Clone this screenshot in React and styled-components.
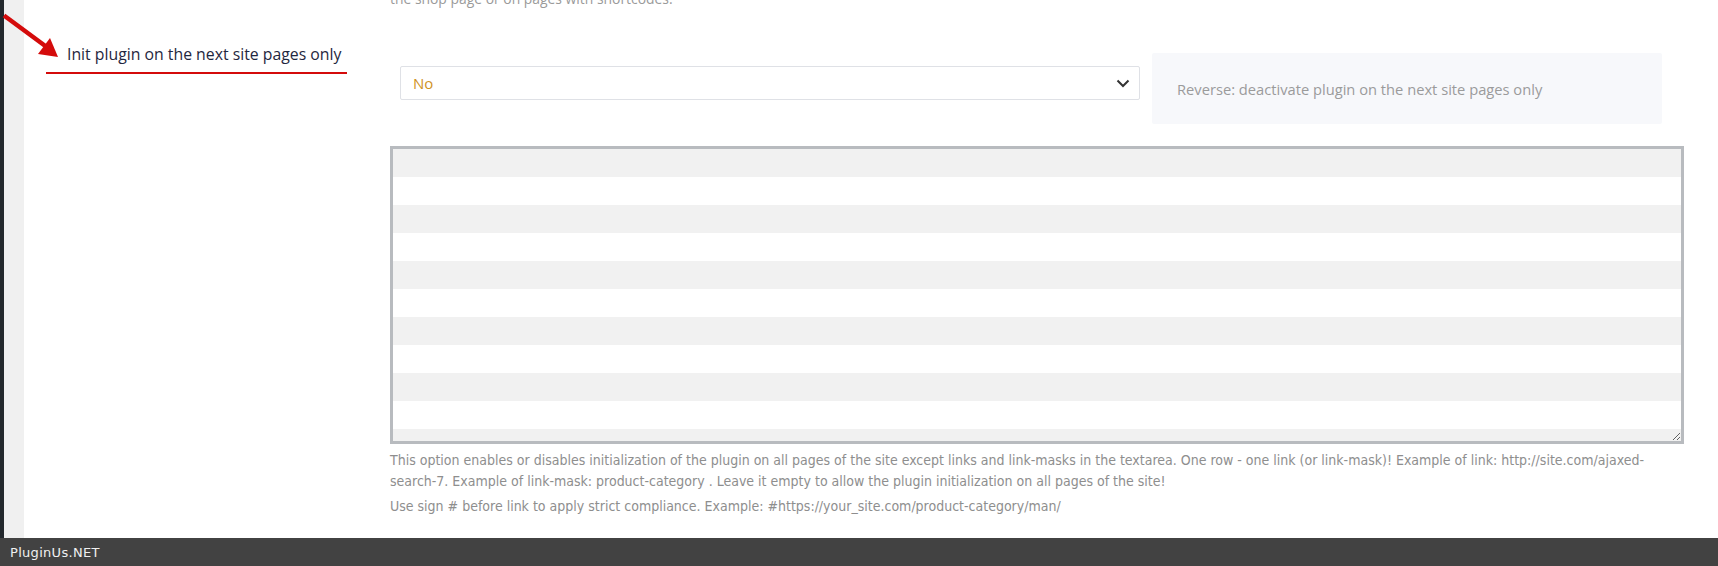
import React from "react";
import styled, { createGlobalStyle } from "styled-components";

const GlobalStyle = createGlobalStyle`
  html, body {
    margin: 0;
    padding: 0;
    background: #fff;
    overflow: hidden;
  }
  * {
    box-sizing: border-box;
  }
`;

const Page = styled.div`
  width: 1718px;
  height: 566px;
  display: flex;
  flex-direction: column;
  font-family: "Open Sans", Lato, sans-serif;
`;

const Body = styled.div`
  flex: 1;
  display: flex;
  overflow: hidden;
  position: relative;
`;

const AdminMenu = styled.div`
  width: 4px;
  background: #23282d;
`;

const Gutter = styled.div`
  width: 20px;
  background: #f0f0f0;
`;

const LabelCell = styled.div`
  width: 366px;
  padding: 44px 0 0 22px;
`;

const Label = styled.div`
  width: 301px;
  padding: 0 0 8px 21px;
  border-bottom: 2px solid #d40b0b;
  font-size: 15.8px;
  line-height: 20px;
  color: #1f2740;
  white-space: nowrap;
`;

const Content = styled.div`
  width: 1294px;
  display: flex;
  flex-direction: column;
`;

const PrevNote = styled.div`
  margin-top: -11px;
  font-size: 13.9px;
  line-height: 20px;
  color: #9a9a9a;
`;

const ControlRow = styled.div`
  display: flex;
  align-items: flex-start;
  margin-top: 44px;
  padding-left: 10px;
`;

const SelectBox = styled.div`
  width: 740px;
  height: 34px;
  margin-top: 13px;
  border: 1px solid #dfe1e6;
  border-radius: 2px;
  background: #fff;
  display: flex;
  align-items: center;
  justify-content: space-between;
  padding: 0 9px 0 12px;
  font-size: 15px;
  color: #cf931f;
`;

const InfoBox = styled.div`
  width: 510px;
  height: 71px;
  margin-left: 12px;
  background: #f7f8fb;
  border-radius: 2px;
  display: flex;
  align-items: center;
  padding-left: 25px;
  font-size: 14.7px;
  color: #9b9b9b;
`;

const LinksArea = styled.textarea`
  display: block;
  width: 1294px;
  height: 298px;
  margin-top: 22px;
  border: 3px solid #b8bbbf;
  border-radius: 0;
  padding: 0 8px;
  font: 14px/28px "Open Sans", sans-serif;
  background: repeating-linear-gradient(
    #f1f1f1 0,
    #f1f1f1 28px,
    #fff 28px,
    #fff 56px
  );
  outline: none;
  resize: vertical;
`;

const Hint = styled.p`
  margin: ${(p) => (p.$first ? "6px" : "4px")} 0 0;
  font-family: "Liberation Sans Narrow", "DejaVu Sans Condensed", sans-serif;
  font-size: 14px;
  line-height: 21px;
  color: #8e8e8e;
`;

const Arrow = styled.svg`
  position: absolute;
  left: 0;
  top: 0;
`;

const Footer = styled.div`
  height: 28px;
  background: #424242;
  display: flex;
  align-items: center;
  padding-left: 10px;
  font-family: "DejaVu Sans", sans-serif;
  font-size: 13px;
  letter-spacing: 0.3px;
  color: #f0f0f0;
`;

const Chevron = () => (
  <svg width="14" height="9" viewBox="0 0 14 9" fill="none">
    <path d="M1.5 1.5l5.5 5.5 5.5-5.5" stroke="#333" strokeWidth="2" />
  </svg>
);

export default function App() {
  return (
    <Page>
      <GlobalStyle />
      <Body>
        <AdminMenu />
        <Gutter />
        <LabelCell>
          <Label>Init plugin on the next site pages only</Label>
        </LabelCell>
        <Content>
          <PrevNote>the shop page or on pages with shortcodes.</PrevNote>
          <ControlRow>
            <SelectBox>
              <span>No</span>
              <Chevron />
            </SelectBox>
            <InfoBox>Reverse: deactivate plugin on the next site pages only</InfoBox>
          </ControlRow>
          <LinksArea defaultValue="" />
          <Hint $first>
            This option enables or disables initialization of the plugin on all pages of the site
            except links and link-masks in the textarea. One row - one link (or link-mask)! Example
            of link: http://site.com/ajaxed-search-7. Example of link-mask: product-category . Leave
            it empty to allow the plugin initialization on all pages of the site!
          </Hint>
          <Hint>
            Use sign # before link to apply strict compliance. Example:
            #https://your_site.com/product-category/man/
          </Hint>
        </Content>
        <Arrow width="70" height="70" viewBox="0 0 70 70">
          <line x1="4" y1="15.5" x2="46" y2="46.5" stroke="#d40b0b" strokeWidth="4.5" />
          <polygon points="50,38 38,54 58,57" fill="#d40b0b" />
        </Arrow>
      </Body>
      <Footer>PluginUs.NET</Footer>
    </Page>
  );
}
